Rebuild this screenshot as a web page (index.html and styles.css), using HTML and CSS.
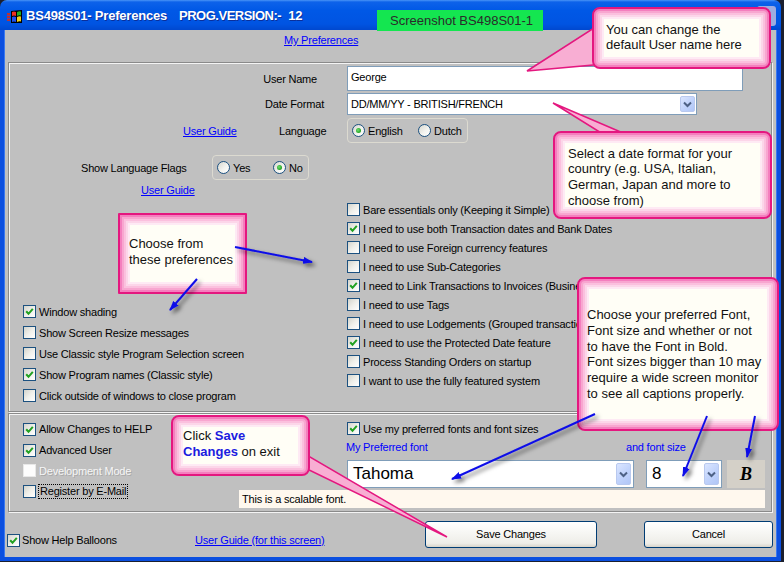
FILE: index.html
```html
<!DOCTYPE html>
<html>
<head>
<meta charset="utf-8">
<title>BS498S01 Preferences</title>
<link rel="stylesheet" href="styles.css">
</head>
<body>
<div class="window">
  <div class="titlebar">
    <svg class="app-icon" width="16" height="14" viewBox="0 0 16 14">
      <rect x="0" y="3" width="3" height="8" fill="#c03030"/>
      <rect x="0" y="5" width="3" height="1" fill="#3050d0"/>
      <rect x="0" y="8" width="3" height="1" fill="#3050d0"/>
      <path d="M4 1 L15 0 L15 13 L4 13 Z" fill="#000"/>
      <path d="M5 2 Q7 1 9 2 L9 6 Q7 5 5 6 Z" fill="#f03020"/>
      <path d="M10 2 Q12 1 14 1.5 L14 5.5 Q12 5 10 6 Z" fill="#20b020"/>
      <path d="M5 7 Q7 6 9 7 L9 12 Q7 11 5 12 Z" fill="#2050f0"/>
      <path d="M10 7 Q12 6 14 6.5 L14 11.5 Q12 11 10 12 Z" fill="#f0d020"/>
    </svg>
    <span class="title"><span>BS498S01- Preferences</span><span class="tv">PROG.VERSION:-</span><span class="tn">12</span></span>
    <span class="shot-tag">Screenshot BS498S01-1</span>
    <span class="tb-close"></span>
  </div>
  <div class="frame">
    <div class="client">
      <div class="toplink"><span class="link">My Preferences</span></div>

      <div class="group upper">
        <div class="row r-user">
          <span class="lbl lbl-user">User Name</span>
          <div class="textbox">George</div>
        </div>
        <div class="row r-date">
          <span class="lbl lbl-date">Date Format</span>
          <div class="combo combo-date">
            <span class="combo-text">DD/MM/YY - BRITISH/FRENCH</span>
            <span class="dd-btn"><svg width="9" height="7" viewBox="0 0 9 7"><path d="M1 1.5 L4.5 5 L8 1.5" fill="none" stroke="#4d6185" stroke-width="2"/></svg></span>
          </div>
        </div>
        <div class="row r-lang">
          <span class="cell-guide"><span class="link">User Guide</span></span>
          <span class="cell-language">Language</span>
          <div class="radiobox rb-lang">
            <span class="ritem ri-eng"><span class="rb on"></span>English</span>
            <span class="ritem"><span class="rb"></span>Dutch</span>
          </div>
        </div>
        <div class="row r-flags">
          <span class="cell-flags">Show Language Flags</span>
          <div class="radiobox rb-flags">
            <span class="ritem ri-yes"><span class="rb"></span>Yes</span>
            <span class="ritem"><span class="rb on"></span>No</span>
          </div>
        </div>
        <div class="row r-guide"><span class="link">User Guide</span></div>

        <div class="prefs">
          <div class="pcol-left">
            <div class="cbrow lrow"><span class="cb on"><svg width="11" height="11" viewBox="0 0 11 11"><path d="M2.2 5.3 L4.5 7.8 L8.8 2.8" fill="none" stroke="#21a121" stroke-width="2"/></svg></span>Window shading</div>
            <div class="cbrow lrow"><span class="cb"></span>Show Screen Resize messages</div>
            <div class="cbrow lrow"><span class="cb"></span>Use Classic style Program Selection screen</div>
            <div class="cbrow lrow"><span class="cb on"><svg width="11" height="11" viewBox="0 0 11 11"><path d="M2.2 5.3 L4.5 7.8 L8.8 2.8" fill="none" stroke="#21a121" stroke-width="2"/></svg></span>Show Program names (Classic style)</div>
            <div class="cbrow lrow"><span class="cb"></span>Click outside of windows to close program</div>
          </div>
          <div class="pcol-right">
            <div class="cbrow rrow"><span class="cb"></span>Bare essentials only (Keeping it Simple)</div>
            <div class="cbrow rrow"><span class="cb on"><svg width="11" height="11" viewBox="0 0 11 11"><path d="M2.2 5.3 L4.5 7.8 L8.8 2.8" fill="none" stroke="#21a121" stroke-width="2"/></svg></span>I need to use both Transaction dates and Bank Dates</div>
            <div class="cbrow rrow"><span class="cb"></span>I need to use Foreign currency features</div>
            <div class="cbrow rrow"><span class="cb"></span>I need to use Sub-Categories</div>
            <div class="cbrow rrow"><span class="cb on"><svg width="11" height="11" viewBox="0 0 11 11"><path d="M2.2 5.3 L4.5 7.8 L8.8 2.8" fill="none" stroke="#21a121" stroke-width="2"/></svg></span>I need to Link Transactions to Invoices (Business use)</div>
            <div class="cbrow rrow"><span class="cb"></span>I need to use Tags</div>
            <div class="cbrow rrow"><span class="cb"></span>I need to use Lodgements (Grouped transactions)</div>
            <div class="cbrow rrow"><span class="cb on"><svg width="11" height="11" viewBox="0 0 11 11"><path d="M2.2 5.3 L4.5 7.8 L8.8 2.8" fill="none" stroke="#21a121" stroke-width="2"/></svg></span>I need to use the Protected Date feature</div>
            <div class="cbrow rrow"><span class="cb"></span>Process Standing Orders on startup</div>
            <div class="cbrow rrow"><span class="cb"></span>I want to use the fully featured system</div>
          </div>
        </div>
      </div>

      <div class="group lower">
        <div class="lcol-left">
          <div class="cbrow brow"><span class="cb on"><svg width="11" height="11" viewBox="0 0 11 11"><path d="M2.2 5.3 L4.5 7.8 L8.8 2.8" fill="none" stroke="#21a121" stroke-width="2"/></svg></span>Allow Changes to HELP</div>
          <div class="cbrow brow"><span class="cb on"><svg width="11" height="11" viewBox="0 0 11 11"><path d="M2.2 5.3 L4.5 7.8 L8.8 2.8" fill="none" stroke="#21a121" stroke-width="2"/></svg></span>Advanced User</div>
          <div class="cbrow brow disabled"><span class="cb cb-dis"></span>Development Mode</div>
          <div class="cbrow brow"><span class="cb"></span><span class="focus">Register by E-Mail</span></div>
        </div>
        <div class="lcol-right">
          <div class="cbrow rrow"><span class="cb on"><svg width="11" height="11" viewBox="0 0 11 11"><path d="M2.2 5.3 L4.5 7.8 L8.8 2.8" fill="none" stroke="#21a121" stroke-width="2"/></svg></span>Use my preferred fonts and font sizes</div>
          <div class="font-labels"><span class="fl-font">My Preferred font</span><span>and font size</span></div>
          <div class="font-row">
            <div class="combo combo-font">
              <span class="combo-text big">Tahoma</span>
              <span class="dd-btn tall"><svg width="9" height="7" viewBox="0 0 9 7"><path d="M1 1.5 L4.5 5 L8 1.5" fill="none" stroke="#4d6185" stroke-width="2"/></svg></span>
            </div>
            <div class="combo combo-size">
              <span class="combo-text big">8</span>
              <span class="dd-btn tall"><svg width="9" height="7" viewBox="0 0 9 7"><path d="M1 1.5 L4.5 5 L8 1.5" fill="none" stroke="#4d6185" stroke-width="2"/></svg></span>
            </div>
            <div class="bold-btn">B</div>
          </div>
          <div class="scalable">This is a scalable font.</div>
        </div>
      </div>

      <div class="footer">
        <div class="cbrow footer-cb"><span class="cb on"><svg width="11" height="11" viewBox="0 0 11 11"><path d="M2.2 5.3 L4.5 7.8 L8.8 2.8" fill="none" stroke="#21a121" stroke-width="2"/></svg></span>Show Help Balloons</div>
        <div class="footer-link"><span class="link">User Guide (for this screen)</span></div>
        <div class="btn btn-save">Save Changes</div>
        <div class="btn btn-cancel">Cancel</div>
      </div>
    </div>
  </div>
</div>

<svg class="pointers" width="784" height="562" viewBox="0 0 784 562">
  <polygon points="527,71 597,26 604,64" fill="#f8aed3" stroke="#e4177f" stroke-width="1.5"/>
  <polygon points="553,103 606,136 630,136" fill="#f8aed3" stroke="#e4177f" stroke-width="1.5"/>
  <polygon points="447,537 305,454 305,468" fill="#f8aed3" stroke="#e4177f" stroke-width="1.5"/>
</svg>

<div class="callout c1">You can change the<br>default User name here</div>
<div class="callout c2">Select a date format for your<br>country (e.g. USA, Italian,<br>German, Japan and more to<br>choose from)</div>
<div class="callout c3">Choose from<br>these preferences</div>
<div class="callout c4">Choose your preferred Font,<br>Font size and whether or not<br>to have the Font in Bold.<br>Font sizes bigger than 10 may<br>require a wide screen monitor<br>to see all captions properly.</div>
<div class="callout c5">Click <b class="hl">Save</b><br><b class="hl">Changes</b> on exit</div>

<svg class="arrows" width="784" height="562" viewBox="0 0 784 562">
  <defs>
    <marker id="ah" markerWidth="10" markerHeight="8" refX="9" refY="4" orient="auto" markerUnits="userSpaceOnUse">
      <path d="M0,0.5 L10,4 L0,7.5 Z" fill="#0c0ce8"/>
    </marker>
    <filter id="sh" x="-20%" y="-20%" width="140%" height="140%">
      <feDropShadow dx="3" dy="3" stdDeviation="2" flood-color="#000" flood-opacity="0.55"/>
    </filter>
  </defs>
  <g filter="url(#sh)" stroke="#0c0ce8" stroke-width="2" fill="none" marker-end="url(#ah)">
    <path d="M235,247 L312,262"/>
    <path d="M197,279 L170,310"/>
    <path d="M595,414 L452,479"/>
    <path d="M707,416 L683,476"/>
    <path d="M755,416 L747,457"/>
  </g>
</svg>
</body>
</html>
```
FILE: styles.css
```css
html, body {
  margin: 0;
  padding: 0;
}
body {
  width: 784px;
  height: 562px;
  overflow: hidden;
  position: relative;
  background: #1b1f2e;
  font-family: "Liberation Sans", Arial, sans-serif;
  font-size: 11px;
  letter-spacing: -0.2px;
  color: #000;
}

.window {
  width: 781px;
  height: 561px;
  display: flex;
  flex-direction: column;
}

.titlebar {
  height: 30px;
  flex: none;
  display: flex;
  align-items: flex-start;
  border-radius: 7px 7px 0 0;
  background: linear-gradient(#4a94f7 0, #0d62ea 2px, #0058e6 35%, #0054e2 80%, #0048cf 100%);
  position: relative;
  letter-spacing: 0;
}
.app-icon {
  flex: none;
  margin: 10px 0 0 7px;
}
.title {
  flex: none;
  width: 351px;
  margin: 8px 0 0 3px;
  font-size: 13px;
  line-height: 16px;
  font-weight: bold;
  color: #fff;
  white-space: nowrap;
  letter-spacing: -0.2px;
  text-shadow: 1px 1px 0 #0b2f9a;
}
.title .tv { margin-left: 12px; letter-spacing: -0.5px; }
.title .tn { margin-left: 7px; }
.shot-tag {
  flex: none;
  margin-top: 10px;
  width: 166px;
  height: 21px;
  box-sizing: border-box;
  padding-left: 13px;
  background: #14e650;
  color: #2b2b2b;
  font-size: 13px;
  line-height: 21px;
  position: relative;
  z-index: 1;
}
.tb-close {
  flex: none;
  margin: 6px 5px 0 auto;
  width: 19px;
  height: 20px;
  border-radius: 3px;
  background: #9eacdf;
}

.frame {
  flex: 1;
  display: flex;
  background: #c0c0c0;
  border: 4px solid #0b4fe0;
  border-top: none;
  box-shadow: inset 1px 0 0 #3a78f0, inset -1px 0 0 #3a78f0;
}
.client {
  flex: 1;
  display: flex;
  flex-direction: column;
}

.link {
  color: #0000ff;
  text-decoration: underline;
  white-space: nowrap;
}

.toplink {
  height: 32px;
  flex: none;
  box-sizing: border-box;
  padding: 4px 0 0 280px;
  line-height: 13px;
}

.group {
  flex: none;
  box-sizing: border-box;
  margin-left: 4px;
  width: 764px;
  border: 1px solid #8a8a8a;
  box-shadow: inset 1px 1px 0 #f4f4f4, 1px 1px 0 #f4f4f4;
}
.upper {
  height: 350px;
  display: flex;
  flex-direction: column;
}
.lower {
  height: 99px;
  margin-top: 1px;
  display: flex;
}

.row {
  display: flex;
  align-items: center;
  flex: none;
}
.lbl {
  text-align: right;
  white-space: nowrap;
}
.r-user { margin-top: 3px; height: 25px; }
.lbl-user { width: 308px; margin-right: 30px; }
.textbox {
  box-sizing: border-box;
  width: 396px;
  height: 25px;
  border: 1px solid #7f9db9;
  background: #fff;
  padding-left: 3px;
  line-height: 21px;
}
.r-date { margin-top: 2px; height: 22px; }
.lbl-date { width: 315px; margin-right: 23px; }

.combo {
  box-sizing: border-box;
  border: 1px solid #7f9db9;
  background: #fff;
  display: flex;
  align-items: center;
}
.combo-date { width: 350px; height: 22px; }
.combo-text {
  flex: 1;
  padding-left: 3px;
  white-space: nowrap;
}
.combo-text.big {
  font-size: 17px;
  letter-spacing: 0;
  padding-left: 5px;
}
.dd-btn {
  flex: none;
  width: 15px;
  height: 16px;
  margin-right: 1px;
  box-sizing: border-box;
  border: 1px solid #b9c9ef;
  border-radius: 2px;
  background: linear-gradient(135deg, #dbe6ff 0%, #c2d4fc 50%, #b0c6f7 100%);
  display: flex;
  align-items: center;
  justify-content: center;
}
.dd-btn.tall {
  height: 22px;
  margin-right: 2px;
}

.r-lang { margin-top: 3px; height: 25px; }
.cell-guide {
  width: 96px;
  margin-left: 174px;
}
.cell-language { width: 68px; }
.radiobox {
  box-sizing: border-box;
  height: 25px;
  border: 1px solid #dcdad0;
  border-radius: 4px;
  display: flex;
  align-items: center;
  padding-left: 4px;
}
.rb-lang { width: 121px; }
.rb-flags { width: 97px; }
.ritem {
  display: flex;
  align-items: center;
  gap: 3px;
  white-space: nowrap;
}
.ri-eng { width: 66px; }
.ri-yes { width: 56px; }
.rb {
  flex: none;
  width: 13px;
  height: 13px;
  box-sizing: border-box;
  border: 1px solid #1c5180;
  border-radius: 50%;
  background: linear-gradient(135deg, #d6d6ce 0%, #f3f3ef 55%, #ffffff 100%);
  display: flex;
  align-items: center;
  justify-content: center;
}
.rb.on::after {
  content: "";
  width: 5px;
  height: 5px;
  border-radius: 50%;
  background: radial-gradient(circle at 40% 40%, #6fe06f 0%, #21a121 70%);
}

.r-flags { margin-top: 12px; height: 25px; }
.cell-flags {
  width: 131px;
  margin-left: 72px;
  white-space: nowrap;
}
.r-guide {
  margin-top: 3px;
  height: 14px;
  padding-left: 132px;
}

.prefs {
  display: flex;
  margin-top: 3px;
}
.pcol-left {
  width: 338px;
  box-sizing: border-box;
  padding: 101px 0 0 14px;
  flex: none;
}
.pcol-right {
  flex: 1;
}
.cbrow {
  display: flex;
  align-items: center;
  gap: 3px;
  white-space: nowrap;
}
.lrow { height: 21px; }
.rrow { height: 19px; }
.cb {
  flex: none;
  width: 13px;
  height: 13px;
  box-sizing: border-box;
  border: 1px solid #1c5180;
  background: linear-gradient(135deg, #d4d4cc 0%, #efefea 50%, #ffffff 100%);
  display: flex;
}
.cb svg { display: block; }
.cb-dis {
  border-color: #e8e8e8;
  background: #fdfdfd;
}
.disabled {
  color: #f6f6f6;
  text-shadow: 1px 1px 0 #a8a8a8;
}
.focus {
  outline: 1px dotted #000;
  outline-offset: 0;
  padding: 0 1px;
  line-height: 13px;
}

.lcol-left {
  width: 338px;
  flex: none;
  box-sizing: border-box;
  padding: 5px 0 0 14px;
}
.brow { height: 20.7px; }
.lcol-right {
  flex: 1;
  padding-top: 5px;
  display: flex;
  flex-direction: column;
}
.font-labels {
  margin-top: 2px;
  height: 14px;
  line-height: 14px;
  color: #0000ff;
  display: flex;
}
.fl-font {
  width: 280px;
  margin-left: -1px;
}
.font-row {
  margin-top: 6px;
  height: 28px;
  display: flex;
}
.combo-font { width: 287px; height: 28px; }
.combo-size { width: 76px; height: 28px; margin-left: 12px; }
.bold-btn {
  margin-left: 5px;
  width: 38px;
  height: 28px;
  background: #d4d0c8;
  font-family: "Liberation Serif", "Times New Roman", serif;
  font-weight: bold;
  font-style: italic;
  font-size: 18px;
  line-height: 28px;
  text-align: center;
}
.scalable {
  margin: 2px 0 0 -108px;
  width: 526px;
  height: 18px;
  box-sizing: border-box;
  padding-left: 3px;
  background: #fff8ee;
  line-height: 18px;
}

.footer {
  flex: 1;
  display: flex;
  align-items: flex-start;
  padding-top: 9px;
}
.footer-cb {
  width: 191px;
  box-sizing: border-box;
  padding-left: 3px;
  margin-top: 12px;
  height: 14px;
  gap: 2px;
}
.footer-link {
  width: 230px;
  margin-top: 12px;
  height: 14px;
  line-height: 14px;
}
.btn {
  box-sizing: border-box;
  height: 27px;
  border: 1px solid #003c74;
  border-radius: 3px;
  background: linear-gradient(#ffffff 0%, #f6f6f3 45%, #eeede8 85%, #d8d4ca 100%);
  text-align: center;
  line-height: 25px;
}
.btn-save { width: 172px; }
.btn-cancel { width: 129px; margin-left: 47px; }

.pointers, .arrows {
  position: absolute;
  left: 0;
  top: 0;
  pointer-events: none;
}
.pointers { z-index: 5; }
.arrows { z-index: 7; }

.callout {
  position: absolute;
  z-index: 6;
  box-sizing: border-box;
  border: 2px solid #e4177f;
  border-radius: 8px;
  background: #fffef6;
  box-shadow:
    inset 0 0 0 2px #f47fbe,
    inset 0 0 0 4px #f8a6d0,
    inset 0 0 0 6px #fbc0de,
    inset 0 0 0 8px #fcd6e9,
    inset 0 0 0 10px #feeaf4;
  font-family: "Liberation Sans", Arial, sans-serif;
  font-size: 13px;
  letter-spacing: 0;
  color: #111;
  white-space: nowrap;
}
.c1 {
  left: 592px; top: 7px; width: 179px; height: 62px;
  padding: 12.5px 0 0 12px;
  line-height: 15px;
}
.c2 {
  left: 553px; top: 131px; width: 219px; height: 88px;
  padding: 12.5px 0 0 13px;
  line-height: 15.7px;
}
.c3 {
  left: 118px; top: 213px; width: 129px; height: 81px;
  border-radius: 1px;
  padding: 20.5px 0 0 9px;
  line-height: 16.5px;
}
.c4 {
  left: 577px; top: 277px; width: 202px; height: 154px;
  padding: 28px 0 0 8px;
  line-height: 15.8px;
}
.c5 {
  left: 171px; top: 415px; width: 139px; height: 61px;
  padding: 11px 0 0 10px;
  line-height: 16px;
}
.hl {
  color: #1c1ce0;
}
```
